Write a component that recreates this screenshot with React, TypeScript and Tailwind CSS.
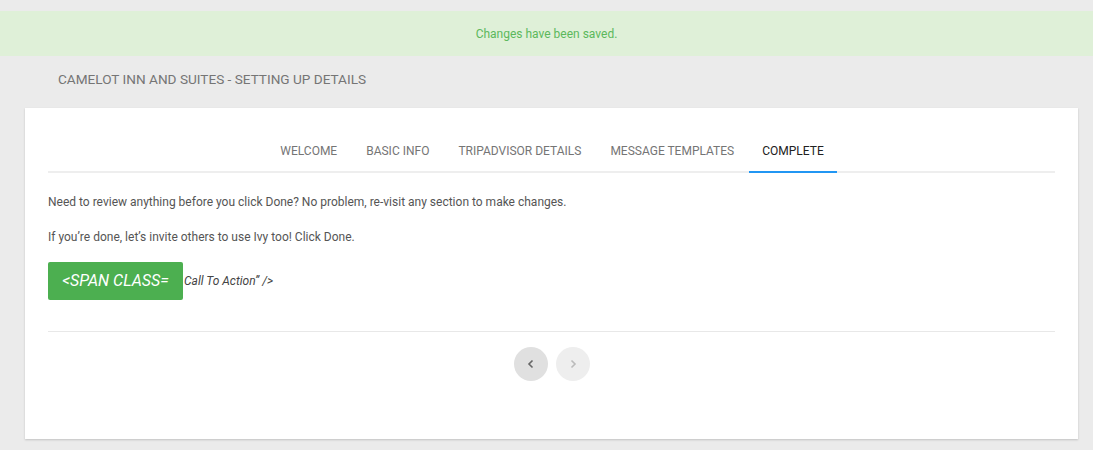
import React from "react";

const tabs = ["WELCOME", "BASIC INFO", "TRIPADVISOR DETAILS", "MESSAGE TEMPLATES", "COMPLETE"];

export default function App() {
  return (
    <div className="min-h-[450px] w-full bg-[#ebebeb] pt-[11px] pb-[11px] font-['Roboto',sans-serif]">
      <div className="flex h-[45px] items-center justify-center bg-[#dff0d8] text-[12px] text-[#5cb85c]">
        Changes have been saved.
      </div>
      <div className="flex h-[52px] items-center pb-[5px] pl-[58px] text-[13.6px] text-[#757575]">
        CAMELOT INN AND SUITES - SETTING UP DETAILS
      </div>
      <div className="ml-[25px] mr-[15px] h-[331px] bg-white px-[23px] pt-[23px] shadow-[0_1px_2px_rgba(0,0,0,0.18)]">
        <div className="flex justify-center gap-[1px] border-b-2 border-[#eeeeee]">
          {tabs.map((t, i) => (
            <div
              key={t}
              className={
                i === 4
                  ? "-mb-[2px] flex h-[42px] items-center border-b-2 border-[#2196f3] px-[13px] text-[12px] text-[#212121]"
                  : "flex h-[40px] items-center px-[14px] text-[12px] text-[#757575]"
              }
            >
              {t}
            </div>
          ))}
        </div>
        <p className="mt-[19px] text-[12px] leading-[20px] text-[#555]">
          Need to review anything before you click Done? No problem, re-visit any section to make changes.
        </p>
        <p className="mt-[15px] text-[12px] leading-[20px] text-[#555]">
          If you’re done, let’s invite others to use Ivy too! Click Done.
        </p>
        <div className="mt-[15px] flex items-center">
          <button className="flex h-[38px] w-[135px] items-center justify-center rounded-[2px] bg-[#4caf50] text-[16px] italic text-white">
            &lt;SPAN CLASS=
          </button>
          <span className="ml-[1px] text-[12px] italic text-[#444]">Call To Action” /&gt;</span>
        </div>
        <div className="mt-[31px] border-t border-[#e8e8e8]" />
        <div className="mt-[15px] flex justify-center gap-[8px]">
          <div className="flex h-[34px] w-[34px] items-center justify-center rounded-full bg-[#e0e0e0]">
            <svg width="10" height="10" viewBox="0 0 10 10">
              <path d="M6.5 1.5 L3 5 L6.5 8.5" fill="none" stroke="#666" strokeWidth="1.6" />
            </svg>
          </div>
          <div className="flex h-[34px] w-[34px] items-center justify-center rounded-full bg-[#eeeeee]">
            <svg width="10" height="10" viewBox="0 0 10 10">
              <path d="M3.5 1.5 L7 5 L3.5 8.5" fill="none" stroke="#bbb" strokeWidth="1.6" />
            </svg>
          </div>
        </div>
      </div>
    </div>
  );
}
